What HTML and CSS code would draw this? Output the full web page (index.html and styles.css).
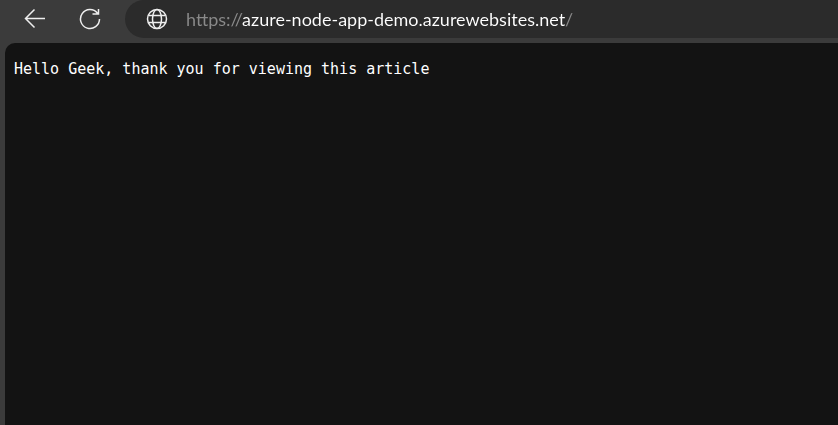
FILE: index.html
```html
<!DOCTYPE html>
<html lang="en">
<head>
    <meta charset="UTF-8">
    <meta name="viewport" content="width=device-width, initial-scale=1.0">
    <title>azure-node-app-demo.azurewebsites.net</title>
    <link rel="stylesheet" href="styles.css">
</head>
<body>

<header class="toolbar">
    <button type="button" class="tool-button" aria-label="Back">
        <svg width="22" height="22" viewBox="0 0 22 22">
            <path d="M21 10.5H1.5M10.5 1.5l-9 9 9 9"/>
        </svg>
    </button>
    <button type="button" class="tool-button" aria-label="Refresh">
        <svg width="22" height="22" viewBox="0 0 22 22">
            <path d="M20.5 11A9.5 9.5 0 1 1 18.5 5.2M19.5 1v5H13.5"/>
        </svg>
    </button>
    <form class="address-bar">
        <button type="button" class="site-button" aria-label="View site information">
            <svg width="22" height="22" viewBox="0 0 22 22">
                <circle cx="11" cy="11" r="9.5"/>
                <ellipse cx="11" cy="11" rx="4.5" ry="9.5"/>
                <path d="M2.5 7.5h17M2.5 14.5h17"/>
            </svg>
        </button>
        <input type="text" class="address" aria-label="Address" spellcheck="false" value="https://azure-node-app-demo.azurewebsites.net/">
    </form>
</header>
<main class="page">
    <pre class="message">Hello Geek, thank you for viewing this article</pre>
</main>

</body>
</html>
```

FILE: styles.css
```css
* {
    box-sizing: border-box;
}

body {
    display: flex;
    flex-direction: column;
    min-height: 100vh;
    margin: 0;
    background-color: #3b3b3b;
    color: #fff;
}

.toolbar {
    display: flex;
    align-items: center;
    padding-left: 15px;
}

.tool-button,
.site-button {
    display: flex;
    flex: none;
    align-items: center;
    justify-content: center;
    width: 40px;
    height: 38px;
    padding: 0;
    border: 0;
    background: none;
}

.tool-button {
    margin-right: 15px;
}

svg {
    fill: none;
    stroke: #eee;
    stroke-width: 1.5;
}

.address-bar {
    display: flex;
    flex: 1;
    align-items: center;
    height: 38px;
    padding-left: 12px;
    border-radius: 19px 0 0 19px;
    background-color: #2b2b2b;
}

/* The gradient dims the scheme and the trailing slash around the host name. */
.address {
    flex: 1;
    min-width: 0;
    height: 38px;
    margin-left: 9px;
    padding: 0;
    border: 0;
    outline: none;
    background: linear-gradient(to right, #8a8a8a 56px, #fff 56px, #fff 379px, #8a8a8a 379px);
    -webkit-background-clip: text;
    background-clip: text;
    color: transparent;
    caret-color: #fff;
    font: 18px/24px Lato, "Open Sans", sans-serif;
}

.page {
    flex: 1;
    margin: 5px 0 0 5px;
    padding: 16px 9px;
    border-radius: 10px 0 0 0;
    background-color: #131313;
}

.message {
    margin: 0;
    font: 15px/20px "DejaVu Sans Mono", monospace;
    white-space: pre-wrap;
}
```
